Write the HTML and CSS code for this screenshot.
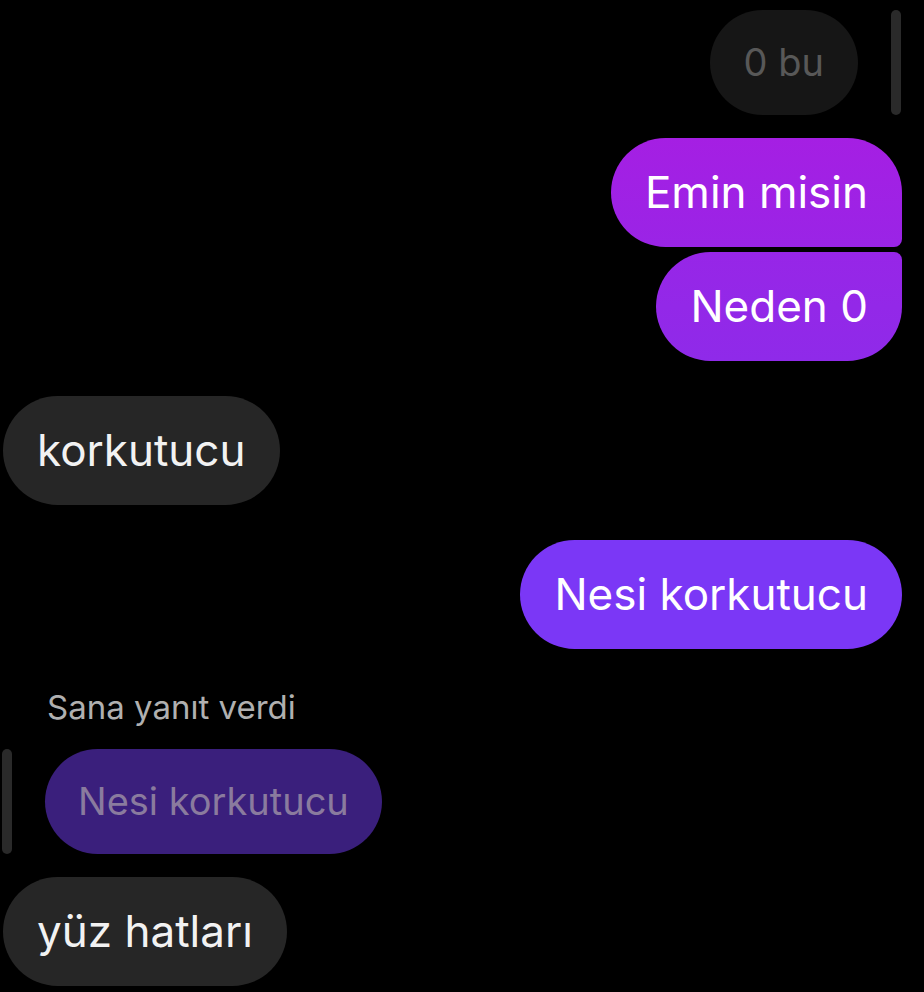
FILE: index.html
```html
<!DOCTYPE html>
<html lang="tr">
<head>
<meta charset="UTF-8" />
<meta name="viewport" content="width=device-width, initial-scale=1" />
<title>Sohbet</title>
<link rel="stylesheet" href="styles.css">
</head>
<body>

<main class="chat">
  <!-- önceki mesaj (yanıtlanan) -->
  <div class="row mine quoted-row">
    <div class="bubble faded">0 bu</div>
    <span class="quote-bar"></span>
  </div>

  <div class="row mine first">
    <div class="bubble sent grad-top">Emin misin</div>
  </div>
  <div class="row mine tight">
    <div class="bubble sent grad-bottom">Neden 0</div>
  </div>

  <div class="row theirs gap">
    <div class="bubble recv">korkutucu</div>
  </div>

  <div class="row mine gap">
    <div class="bubble sent violet">Nesi korkutucu</div>
  </div>

  <p class="reply-label">Sana yanıt verdi</p>
  <div class="row theirs reply-row">
    <span class="quote-bar"></span>
    <div class="bubble reply-quote">Nesi korkutucu</div>
  </div>
  <div class="row theirs after-reply">
    <div class="bubble recv">yüz hatları</div>
  </div>
</main>

</body>
</html>
```

FILE: styles.css
```css
body {
  margin: 0;
  background: #000;
  font-family: Inter, Roboto, sans-serif;
  color: #fff;
}
.chat {
  display: flex;
  flex-direction: column;
  padding: 10px 22px 0 3px;
}
.row {
  display: flex;
  align-items: stretch;
}
.row.mine { justify-content: flex-end; }
.row.theirs { justify-content: flex-start; }

.bubble {
  font-size: 44px;
  line-height: 49px;
  padding: 30px 34px;
  border-radius: 55px;
  white-space: nowrap;
}

.quoted-row { gap: 33px; margin-right: 1px; }
.quote-bar {
  width: 10px;
  border-radius: 5px;
  background: #2a2a2a;
}
.faded {
  background: #161616;
  color: #585858;
  font-size: 38px;
  padding: 28px 34px;
}

.sent { color: #fff; }
.grad-top {
  background: linear-gradient(180deg, #a51fe3, #9a24e6);
  border-bottom-right-radius: 8px;
}
.grad-bottom {
  background: linear-gradient(180deg, #9726e7, #8f2ae9);
  border-top-right-radius: 8px;
}
.violet { background: #7b37f6; }
.recv { background: #262626; color: #f2f2f2; }

.first { margin-top: 23px; }
.tight { margin-top: 5px; }
.gap { margin-top: 35px; }

.reply-label {
  margin: 38px 0 0 44px;
  font-size: 33px;
  line-height: 40px;
  color: #b0b0b0;
}
.reply-row { margin-top: 22px; gap: 33px; margin-left: -1px; }
.reply-quote {
  background: #3a1f7c;
  color: #8a7b9e;
  font-size: 38px;
  padding: 28px 33px;
}
.after-reply { margin-top: 23px; }
```
